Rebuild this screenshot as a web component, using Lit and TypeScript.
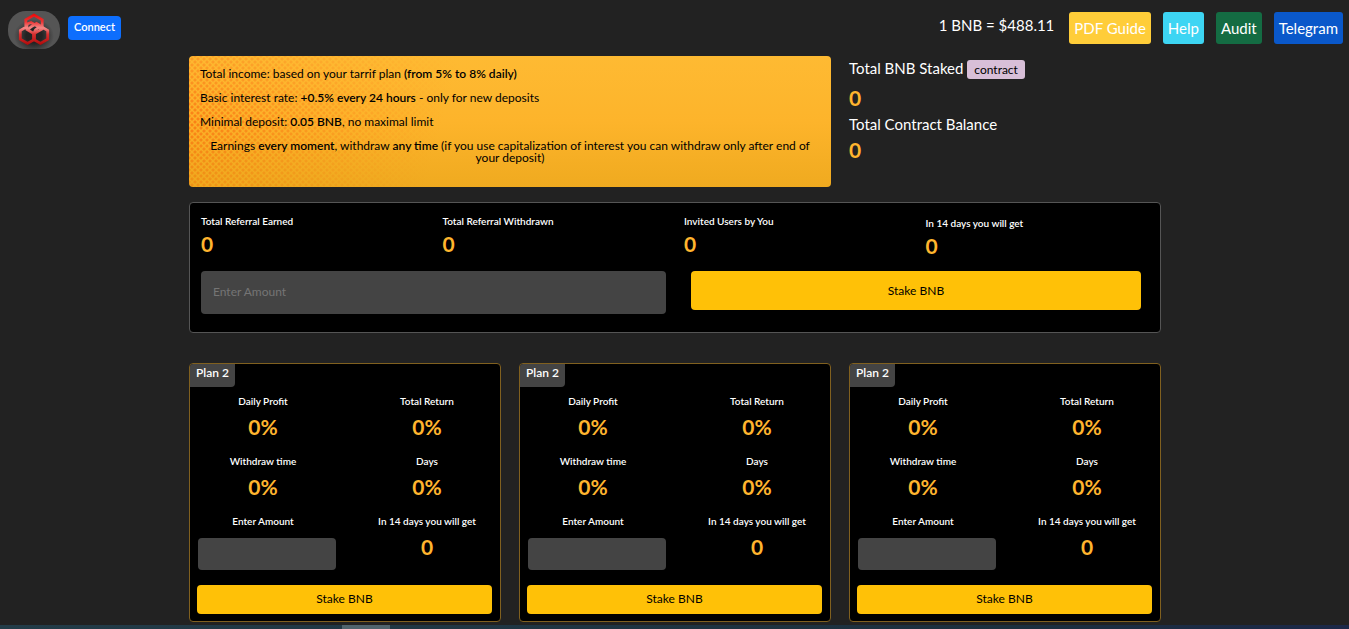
import { LitElement, html, css, svg } from "lit";
import { customElement, property } from "lit/decorators.js";

const controls = css`
  * { box-sizing: border-box; }
  .button {
    display: block;
    border: 0;
    border-radius: 4px;
    padding: 0;
    background: #ffc107;
    color: #000;
    font-family: inherit;
    font-size: 12px;
    line-height: 18px;
    text-align: center;
    cursor: pointer;
  }
  .field {
    display: block;
    width: 100%;
    border: 0;
    border-radius: 4px;
    background: #444;
    color: #fff;
    font-family: inherit;
    font-size: 12px;
  }
  .field::placeholder { color: #757575; }
  .label {
    margin: 0;
    color: #fff;
    font-size: 10px;
    line-height: 12px;
    font-weight: 600;
  }
  .value {
    margin: 0;
    color: #ffb52e;
    font-size: 21px;
    line-height: 26px;
    font-weight: 700;
  }
`;

@customElement("plan-card")
export class PlanCard extends LitElement {
  @property() name = "";

  static styles = [
    controls,
    css`
      :host { display: block; }
      .card {
        border: 1px solid #80601f;
        border-radius: 4px;
        background: #000;
        padding-bottom: 7px;
      }
      .tag {
        display: inline-block;
        margin: 0;
        padding: 0 6px 6px;
        border-radius: 3px 0 4px 0;
        background: #444;
        color: #fff;
        font-size: 12px;
        line-height: 17px;
        font-weight: 600;
        vertical-align: top;
      }
      .grid {
        display: grid;
        grid-template-columns: 1fr 1fr;
        column-gap: 18px;
        row-gap: 15px;
        padding: 8px 0 0;
        text-align: center;
      }
      .cell { display: flex; flex-direction: column; }
      .cell .value { padding-top: 7px; }
      .entry { padding: 11px 0 0 8px; }
      .entry .field { height: 32px; padding: 0 8px; }
      .action { padding: 15px 8px 0 7px; }
      .action .button { width: 100%; height: 29px; padding: 0 0 2px; }
    `,
  ];

  private stat(label: string, value: string) {
    return html`<div class="cell">
      <p class="label">${label}</p>
      <p class="value">${value}</p>
    </div>`;
  }

  render() {
    return html`<article class="card">
      <h2 class="tag">${this.name}</h2>
      <div class="grid">
        ${this.stat("Daily Profit", "0%")} ${this.stat("Total Return", "0%")}
        ${this.stat("Withdraw time", "0%")} ${this.stat("Days", "0%")}
        <div class="cell">
          <label class="label" for="amount">Enter Amount</label>
          <div class="entry"><input class="field" id="amount" type="text" /></div>
        </div>
        ${this.stat("In 14 days you will get", "0")}
      </div>
      <div class="action"><button class="button" type="button">Stake BNB</button></div>
    </article>`;
  }
}

const logo = svg`
  <defs>
    <linearGradient id="red" gradientUnits="userSpaceOnUse" x1="0" y1="3" x2="0" y2="34">
      <stop offset="0" stop-color="#f00808" />
      <stop offset="0.25" stop-color="#ec3434" />
      <stop offset="0.45" stop-color="#f58a88" />
      <stop offset="0.65" stop-color="#d83030" />
      <stop offset="1" stop-color="#b00a0a" />
    </linearGradient>
    <radialGradient id="shade">
      <stop offset="0.4" stop-color="#1a1a1a" stop-opacity="0.85" />
      <stop offset="1" stop-color="#1a1a1a" stop-opacity="0" />
    </radialGradient>
  </defs>
  <rect width="52" height="38" fill="#555" />
  <ellipse cx="26" cy="25" rx="20" ry="17" fill="url(#shade)" />
  <g fill="none" stroke="url(#red)" stroke-width="2.8" stroke-linejoin="miter">
    <path d="M17.800 15V8.800L26 4l8.200 4.800V18L27 22" />
    <path d="M19 15.500l-6.700 4v8.700l7.200 4.200 7-4v-5.400L19 18.500V13l4-1.500 11.500 6.500" />
    <path d="M33 15.500l6.700 4v8.700l-7.200 4.200-7-4V23l2-4 5-4-4-2.500-5 3-4 3.500" />
  </g>`;

@customElement("app-root")
export class AppRoot extends LitElement {
  static styles = [
    controls,
    css`
      :host {
        display: flex;
        flex-direction: column;
        min-height: 100vh;
        background: #222;
        color: #fff;
        font-family: Lato, "Liberation Sans", sans-serif;
      }
      * { box-sizing: border-box; }
      a { color: inherit; text-decoration: none; }
      .top {
        display: flex;
        justify-content: space-between;
        align-items: flex-start;
        padding: 11px 6px 0 8px;
      }
      .brand { display: flex; gap: 8px; align-items: flex-start; }
      .logo { display: block; width: 52px; height: 38px; border-radius: 18px; overflow: hidden; }
      .connect {
        height: 24px;
        margin-top: 5px;
        padding: 0 6px 2px;
        background: #0d6efd;
        color: #fff;
        font-size: 11px;
        font-weight: 600;
      }
      .nav { display: flex; gap: 12px; font-size: 15px; line-height: 32px; padding-top: 1px; }
      .rate { margin: 0 3px 0 0; line-height: 26px; }
      .link { padding: 0 5px; border-radius: 3px; }
      .pdf { background: #ffcd39; }
      .help { background: #3dd5f3; }
      .audit { background: #146c43; }
      .telegram { background: #0a58ca; }
      .main {
        width: 100%;
        max-width: 973px;
        margin: 0 auto;
        padding: 0 0 3px 1px;
      }
      .intro { display: grid; grid-template-columns: 642px 1fr; gap: 18px; padding-top: 7px; }
      .banner {
        min-height: 131px;
        padding: 12px 11px 0;
        border-radius: 4px;
        color: #000;
        font-size: 12px;
        line-height: 12px;
        background:
          linear-gradient(#ffc03a80, #ffb62e00 50%, #e2a01480),
          linear-gradient(105deg, #fdb42b00 0, #fdb42b 40%),
          radial-gradient(circle, #fb7c14 0 1px, transparent 2px) 0 0 / 6px 6px,
          radial-gradient(circle, #fb7c14 0 1px, transparent 2px) 3px 3px / 6px 6px,
          #fdb027;
      }
      .banner b { font-weight: 600; }
      .banner p { margin: 0 0 12px; }
      .banner .center { text-align: center; }
      .totals p { margin: 0; }
      .heading { font-size: 15px; line-height: 24px; }
      .totals .heading:first-child { margin-bottom: 4px; }
      .badge {
        display: inline-block;
        padding: 0 7px;
        border-radius: 3px;
        background: #d8bfd8;
        color: #000;
        font-size: 12px;
        line-height: 19px;
      }
      .totals .value { line-height: 28px; }
      .panel {
        margin-top: 15px;
        padding: 12px 11px 18px;
        border: 1px solid #555;
        border-radius: 4px;
        background: #000;
      }
      .stats { display: grid; grid-template-columns: repeat(4, 1fr); margin-right: -18px; }
      .stats > :last-child { padding-top: 2px; }
      .stats .value { padding-top: 4px; }
      .form { display: flex; gap: 25px; align-items: flex-start; padding: 12px 8px 0 0; }
      .amount { flex: 465 1 0; }
      .amount .field { height: 43px; padding: 0 12px 2px; }
      .form .button { flex: 450 1 0; height: 39px; }
      .plans { display: grid; grid-template-columns: repeat(3, 1fr); gap: 18px; margin-top: 30px; }
      .strip { height: 4px; margin-top: auto; background: linear-gradient(90deg, #233c48, #1c2f3e 75%, #1c2848); }
      .thumb { width: 48px; height: 4px; margin-left: 342px; background: #50646d; }
    `,
  ];

  private stat(label: string) {
    return html`<div>
      <p class="label">${label}</p>
      <p class="value">0</p>
    </div>`;
  }

  render() {
    return html`
      <header class="top">
        <div class="brand">
          <svg class="logo" viewBox="0 0 52 38" aria-hidden="true">${logo}</svg>
          <button class="button connect" type="button">Connect</button>
        </div>
        <nav class="nav">
          <p class="rate">1 BNB = $488.11</p>
          <a class="link pdf" href="#pdf">PDF Guide</a>
          <a class="link help" href="#help">Help</a>
          <a class="link audit" href="#audit">Audit</a>
          <a class="link telegram" href="#telegram">Telegram</a>
        </nav>
      </header>
      <main class="main">
        <section class="intro">
          <div class="banner">
            <p>Total income: based on your tarrif plan <b>(from 5% to 8% daily)</b></p>
            <p>Basic interest rate: <b>+0.5% every 24 hours</b> - only for new deposits</p>
            <p>Minimal deposit: <b>0.05 BNB</b>, no maximal limit</p>
            <p class="center">
              Earnings <b>every moment</b>, withdraw <b>any time</b> (if you use capitalization of
              interest you can withdraw only after end of your deposit)
            </p>
          </div>
          <div class="totals">
            <p class="heading">Total BNB Staked <a class="badge" href="#contract">contract</a></p>
            <p class="value">0</p>
            <p class="heading">Total Contract Balance</p>
            <p class="value">0</p>
          </div>
        </section>
        <section class="panel">
          <div class="stats">
            ${this.stat("Total Referral Earned")} ${this.stat("Total Referral Withdrawn")}
            ${this.stat("Invited Users by You")} ${this.stat("In 14 days you will get")}
          </div>
          <div class="form">
            <div class="amount">
              <input class="field" type="text" placeholder="Enter Amount" aria-label="Enter Amount" />
            </div>
            <button class="button" type="button">Stake BNB</button>
          </div>
        </section>
        <section class="plans">
          ${[1, 2, 3].map(() => html`<plan-card name="Plan 2"></plan-card>`)}
        </section>
      </main>
      <footer class="strip"><div class="thumb"></div></footer>
    `;
  }
}
